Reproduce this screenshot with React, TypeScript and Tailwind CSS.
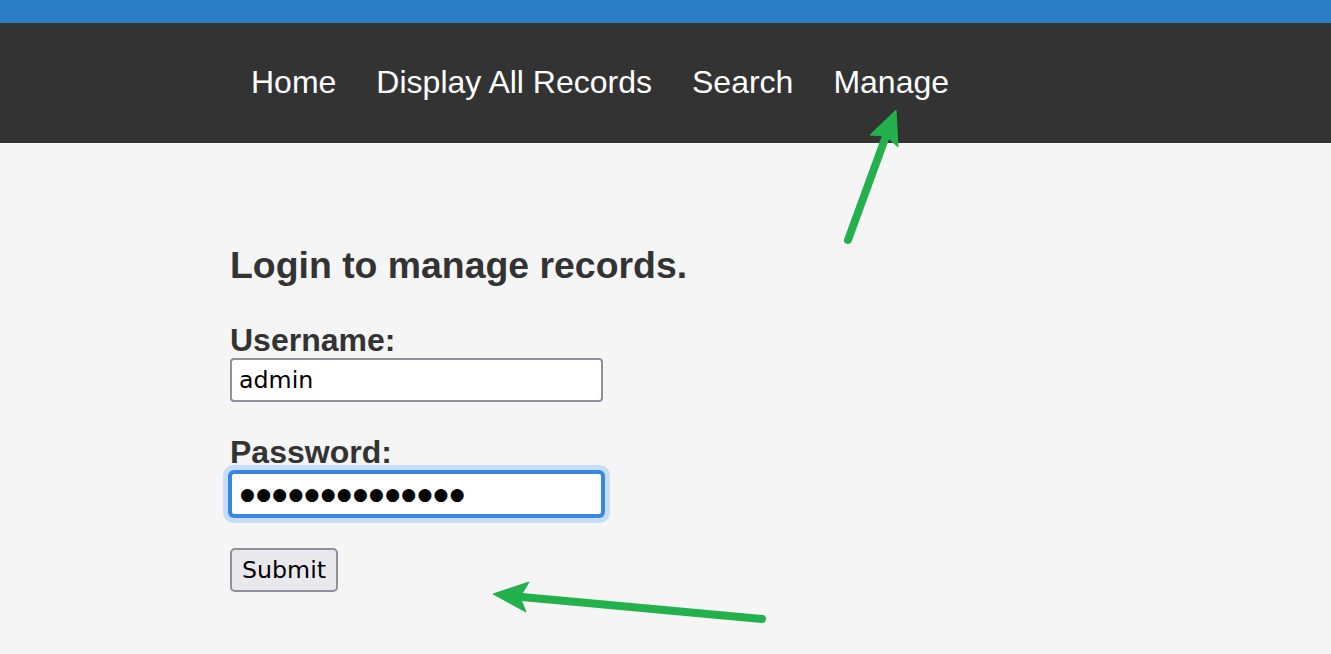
import { useState } from 'react'

const links = ['Home', 'Display All Records', 'Search', 'Manage']

function Annotations() {
  return (
    <svg className="pointer-events-none absolute left-0 top-0" width="1331" height="654" viewBox="0 0 1331 654">
      <g fill="#22b14c" stroke="#22b14c">
        <line x1="848" y1="240" x2="886" y2="136" strokeWidth="8" strokeLinecap="round" />
        <polygon points="896,110 898,147 886,136 870,135" strokeWidth="1" strokeLinejoin="round" />
        <line x1="762" y1="619" x2="522" y2="597" strokeWidth="8" strokeLinecap="round" />
        <polygon points="493,594 529,582 520,597 526,612" strokeWidth="1" strokeLinejoin="round" />
      </g>
    </svg>
  )
}

export default function App() {
  const [username, setUsername] = useState('admin')
  const password = 'adminpassword1'

  return (
    <div className="relative min-h-screen overflow-hidden bg-[#f5f5f5] font-['Liberation_Sans',Arial,sans-serif] text-[#333]">
      <div className="h-[23px] bg-[#2c7fc7]" />
      <nav className="h-[120px] bg-[#333333]">
        <ul className="mx-auto flex h-full max-w-[871px] items-center pb-[2px] text-[32px] text-white">
          {links.map((l) => (
            <li key={l} className="px-[20px] first:pl-[21px]">
              <a href="#">{l}</a>
            </li>
          ))}
        </ul>
      </nav>

      <main className="mx-auto max-w-[871px] pt-[101px]">
        <h3 className="text-[37.4px] font-bold leading-[43px]">Login to manage records.</h3>

        <form className="mt-[35px]" onSubmit={(e) => e.preventDefault()}>
          <label className="block text-[32px] font-bold leading-[36px]" htmlFor="username">Username:</label>
          <input
            id="username"
            type="text"
            value={username}
            onChange={(e) => setUsername(e.target.value)}
            className="block h-[44px] w-[373px] rounded-[4px] border-2 border-[#8f8f9d] bg-white px-[7px] font-['DejaVu_Sans',sans-serif] text-[23.7px] text-black outline-none"
          />

          <label className="mt-[32px] block text-[32px] font-bold leading-[36px]" htmlFor="password">Password:</label>
          <input
            id="password"
            type="text"
            readOnly
            value={'●'.repeat(password.length)}
            className="mt-[2px] block h-[44px] w-[373px] rounded-[4px] border-2 border-[#3a86e0] bg-white px-[8px] font-['DejaVu_Sans',sans-serif] text-[17px] tracking-[1.3px] text-black shadow-[0_0_0_2px_#3a86e0,0_0_0_7px_#c6defa] outline-none"
          />

          <button
            type="submit"
            className="mt-[32px] block h-[44px] w-[108px] rounded-[5px] border-2 border-[#8f8f9d] bg-[#e9e9ed] pt-[2px] font-['DejaVu_Sans',sans-serif] text-[23.7px] text-black"
          >
            Submit
          </button>
        </form>
      </main>

      <Annotations />
    </div>
  )
}
